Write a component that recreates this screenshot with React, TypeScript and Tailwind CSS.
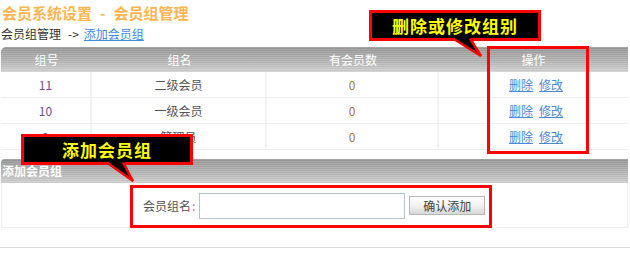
import React from "react";

const headerBg =
  "bg-[image:repeating-linear-gradient(to_bottom,rgba(255,255,255,0.10)_0px,rgba(255,255,255,0.10)_1px,rgba(0,0,0,0.03)_1px,rgba(0,0,0,0.03)_2px),linear-gradient(to_bottom,#989898,#b4b4b4_55%,#d2d2d2)]";

const rows = [
  { id: "11", name: "二级会员", count: "0" },
  { id: "10", name: "一级会员", count: "0" },
  { id: "9", name: "管理员", count: "0" },
];

function Callout({
  text,
  className,
  tail,
}: {
  text: string;
  className: string;
  tail: { base1: number; base2: number; tipX: number; tipY: number };
}) {
  return (
    <div className={"absolute " + className}>
      <div className="w-full h-full bg-black border-[3px] border-[#ff0000] flex items-center justify-center text-[17px] font-bold text-[#ffff00] tracking-[1px]">
        {text}
      </div>
      <svg
        className="absolute left-0 bottom-0 overflow-visible"
        width="1"
        height="1"
      >
        <polygon
          points={`${tail.base1 - 1},-3 ${tail.base2 + 1},-3 ${tail.tipX},${tail.tipY}`}
          fill="black"
        />
        <polyline
          points={`${tail.base1},-1.5 ${tail.tipX},${tail.tipY} ${tail.base2},-1.5`}
          fill="none"
          stroke="#ff0000"
          strokeWidth="2.5"
          strokeLinejoin="miter"
        />
      </svg>
    </div>
  );
}

export default function App() {
  return (
    <div className="relative w-[630px] h-[265px] bg-white overflow-hidden font-['Noto_Sans_CJK_SC','Noto_Sans',sans-serif] text-[12px]">
      <div className="pl-[2px] pt-[4px] h-[26px] leading-[18px] text-[15px] font-bold text-[#ffb54f] flex">
        <span>会员系统设置</span>
        <span className="mx-[8px]">-</span>
        <span>会员组管理</span>
      </div>
      <div className="pl-[1px] h-[21px] leading-[16px] text-[#333] flex">
        <span>会员组管理</span>
        <span className="ml-[7px] mr-[5px]">-&gt;</span>
        <span className="text-[#3d8be0] underline">添加会员组</span>
      </div>

      {/* Table */}
      <div className="ml-[1px] w-[627px]">
        <div
          className={
            "grid grid-cols-[91px_175px_172px_189px] h-[25px] rounded-tl-[5px] text-white leading-[25px] text-center " +
            headerBg
          }
        >
          <div>组号</div>
          <div>组名</div>
          <div>有会员数</div>
          <div>操作</div>
        </div>
        {rows.map((r) => (
          <div
            key={r.id}
            className="grid grid-cols-[91px_175px_172px_189px] h-[26px] leading-[25px] text-center border-b border-[#efefef]"
          >
            <div className="border-r-2 border-[#f2f2f2] text-[#7a4a8c]">{r.id}</div>
            <div className="border-r-2 border-[#f2f2f2] text-[#555]">{r.name}</div>
            <div className="border-r-2 border-[#f2f2f2] text-[#9a7a3a]">{r.count}</div>
            <div className="text-[#4a8ad4] flex justify-center gap-[6px] pl-[5px]">
              <span className="underline">删除</span>
              <span className="underline">修改</span>
            </div>
          </div>
        ))}
      </div>

      {/* Add section */}
      <div className="ml-[1px] mt-[9px] w-[627px]">
        <div
          className={
            "h-[24px] rounded-tl-[4px] pl-[1px] leading-[24px] text-white font-bold " +
            headerBg
          }
        >
          添加会员组
        </div>
        <div className="h-[45px] border-x border-b border-[#f0f0f0] flex items-center pl-[141px] pt-[1px]">
          <span className="text-[#555]">会员组名</span>
          <span className="text-[#a070c0] ml-[1px] mr-[4px]">:</span>
          <div className="w-[206px] h-[26px] border border-[#b4c4d4] bg-white"></div>
          <button className="ml-[4px] w-[76px] h-[19px] border border-[#b8b8b8] bg-[linear-gradient(to_bottom,#ffffff,#f2f2f2_50%,#d8d8d8)] text-[#444] text-[12px] leading-[17px]">
            确认添加
          </button>
        </div>
      </div>
      <div className="mt-[19px] h-[1px] bg-[#dcdcdc]"></div>

      {/* Red highlight boxes */}
      <div className="absolute left-[487px] top-[46px] w-[102px] h-[108px] border-[3px] border-[#ff0000]"></div>
      <div className="absolute left-[130px] top-[185px] w-[362px] h-[43px] border-[3px] border-[#ff0000]"></div>

      {/* Callouts */}
      <Callout
        text="删除或修改组别"
        className="left-[369px] top-[10px] w-[172px] h-[31px]"
        tail={{ base1: 84, base2: 101, tipX: 112, tipY: 16 }}
      />
      <Callout
        text="添加会员组"
        className="left-[21px] top-[134px] w-[172px] h-[31px]"
        tail={{ base1: 86, base2: 102, tipX: 112, tipY: 17 }}
      />
    </div>
  );
}
